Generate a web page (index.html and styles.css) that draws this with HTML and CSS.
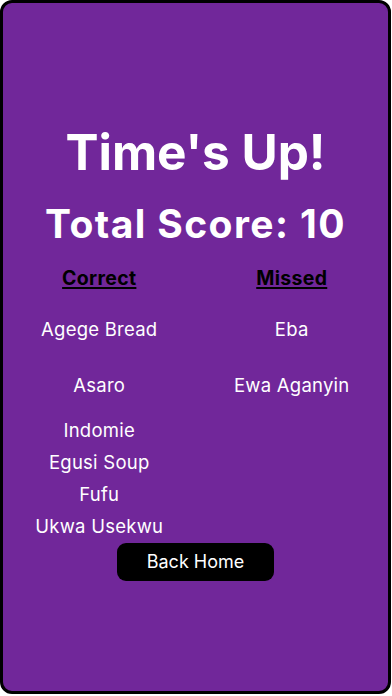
FILE: index.html
```html
<!DOCTYPE html>
<html lang="en">
<head>
<meta charset="utf-8">
<title>Time's Up</title>
<link rel="stylesheet" href="styles.css">
</head>
<body>
<main class="screen">
  <h1 class="title">Time's Up!</h1>
  <h2 class="score">Total Score: 10</h2>
  <section class="results">
    <div class="column">
      <h3 class="col-head">Correct</h3>
      <ul class="list">
        <li class="item item--pair">Agege Bread</li>
        <li class="item item--pair-last">Asaro</li>
        <li class="item">Indomie</li>
        <li class="item">Egusi Soup</li>
        <li class="item">Fufu</li>
        <li class="item">Ukwa Usekwu</li>
      </ul>
    </div>
    <div class="column">
      <h3 class="col-head">Missed</h3>
      <ul class="list">
        <li class="item item--pair">Eba</li>
        <li class="item item--pair-last">Ewa Aganyin</li>
      </ul>
    </div>
  </section>
  <button class="home-btn" type="button">Back Home</button>
</main>
</body>
</html>
```

FILE: styles.css
```css
* { box-sizing: border-box; }
html, body { margin: 0; padding: 0; background: #ffffff; }
body {
  font-family: Inter, "Noto Sans", "Liberation Sans", sans-serif;
  width: 392px;
  height: 696px;
}
.screen {
  width: 391px;
  height: 694px;
  background: #71279a;
  border: 3px solid #000;
  border-radius: 12px;
  display: flex;
  flex-direction: column;
  align-items: center;
  padding-top: 120px;
  color: #fff;
}
.title {
  margin: 0;
  font-size: 49.5px;
  line-height: 58px;
  font-weight: 700;
  white-space: nowrap;
}
.score {
  margin: 20.1px 0 0;
  font-size: 39px;
  line-height: 46px;
  font-weight: 700;
  letter-spacing: 1.4px;
  white-space: nowrap;
}
.results {
  margin-top: 20.3px;
  width: 100%;
  display: grid;
  grid-template-columns: 1fr 1fr;
}
.column {
  display: flex;
  flex-direction: column;
  align-items: center;
}
.col-head {
  margin: 0;
  font-size: 19.5px;
  line-height: 23px;
  font-weight: 700;
  letter-spacing: 0.3px;
  color: #000;
  text-decoration: underline;
  text-underline-offset: 2px;
  text-decoration-thickness: 2px;
}
.list {
  list-style: none;
  margin: 22.9px 0 0;
  padding: 0;
  display: flex;
  flex-direction: column;
  align-items: center;
}
.item {
  font-size: 18.5px;
  line-height: 32px;
  letter-spacing: 0.25px;
  white-space: nowrap;
}
.item--pair { margin-bottom: 24px; }
.item--pair-last { margin-bottom: 13px; }
.home-btn {
  margin-top: 0.5px;
  width: 157px;
  height: 38px;
  border: none;
  border-radius: 9px;
  background: #000;
  color: #fff;
  font-family: inherit;
  font-size: 18px;
  line-height: 38px;
  padding: 0;
}
```
